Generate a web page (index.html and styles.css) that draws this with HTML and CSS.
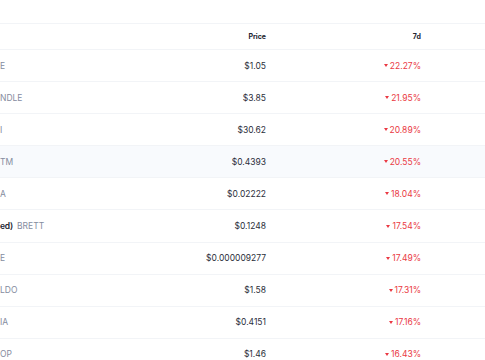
FILE: index.html
```html
<!DOCTYPE html>
<html>
<head>
<meta charset="utf-8">
<link rel="stylesheet" href="styles.css">
</head>
<body>
<div class="table">
  <div class="row head">
    <div class="name"></div>
    <div class="num">Price</div>
    <div class="num">7d</div>
    <div></div>
  </div>
  <div class="row"><div class="name"><span class="sym">E</span></div><div class="num price">$1.05</div><div class="num chg"><i class="caret"></i>22.27%</div><div></div></div>
  <div class="row"><div class="name"><span class="sym">NDLE</span></div><div class="num price">$3.85</div><div class="num chg"><i class="caret"></i>21.95%</div><div></div></div>
  <div class="row"><div class="name"><span class="sym">I</span></div><div class="num price">$30.62</div><div class="num chg"><i class="caret"></i>20.89%</div><div></div></div>
  <div class="row hover"><div class="name"><span class="sym">TM</span></div><div class="num price">$0.4393</div><div class="num chg"><i class="caret"></i>20.55%</div><div></div></div>
  <div class="row"><div class="name"><span class="sym">A</span></div><div class="num price">$0.02222</div><div class="num chg"><i class="caret"></i>18.04%</div><div></div></div>
  <div class="row"><div class="name"><span class="full">ed)</span><span class="sym">BRETT</span></div><div class="num price">$0.1248</div><div class="num chg"><i class="caret"></i>17.54%</div><div></div></div>
  <div class="row"><div class="name"><span class="sym">E</span></div><div class="num price">$0.000009277</div><div class="num chg"><i class="caret"></i>17.49%</div><div></div></div>
  <div class="row"><div class="name"><span class="sym">LDO</span></div><div class="num price">$1.58</div><div class="num chg"><i class="caret"></i>17.31%</div><div></div></div>
  <div class="row"><div class="name"><span class="sym">IA</span></div><div class="num price">$0.4151</div><div class="num chg"><i class="caret"></i>17.16%</div><div></div></div>
  <div class="row"><div class="name"><span class="sym">OP</span></div><div class="num price">$1.46</div><div class="num chg"><i class="caret"></i>16.43%</div><div></div></div>
</div>
</body>
</html>
```
FILE: styles.css
```css
html, body {
  margin: 0;
  padding: 0;
  background: #ffffff;
  overflow: hidden;
}
body {
  font-family: Inter, "Noto Sans", "Liberation Sans", sans-serif;
  color: #222531;
}
.table {
  padding-top: 23px;
}
.row {
  display: grid;
  grid-template-columns: 146px 120px 155px 1fr;
  align-items: center;
  box-sizing: border-box;
  height: 32.1px;
  border-bottom: 1px solid #f2f4f7;
  font-size: 8.5px;
}
.row.head {
  height: 27px;
  border-top: 1px solid #f2f4f7;
  font-size: 7px;
  font-weight: 700;
  color: #222531;
}
.row.hover {
  background: #f8fafd;
}
.name {
  display: flex;
  align-items: center;
  gap: 4px;
  white-space: nowrap;
  overflow: hidden;
}
.sym {
  color: #858ca0;
  font-weight: 400;
}
.full {
  color: #222531;
  font-weight: 600;
  letter-spacing: -0.2px;
}
.num {
  text-align: right;
  white-space: nowrap;
}
.price {
  color: #2b2e3a;
}
.chg {
  color: #ea3943;
  display: flex;
  justify-content: flex-end;
  align-items: center;
}
.caret {
  display: inline-block;
  width: 0;
  height: 0;
  border-left: 2.5px solid transparent;
  border-right: 2.5px solid transparent;
  border-top: 3px solid #ea3943;
  margin-right: 2px;
}
```
